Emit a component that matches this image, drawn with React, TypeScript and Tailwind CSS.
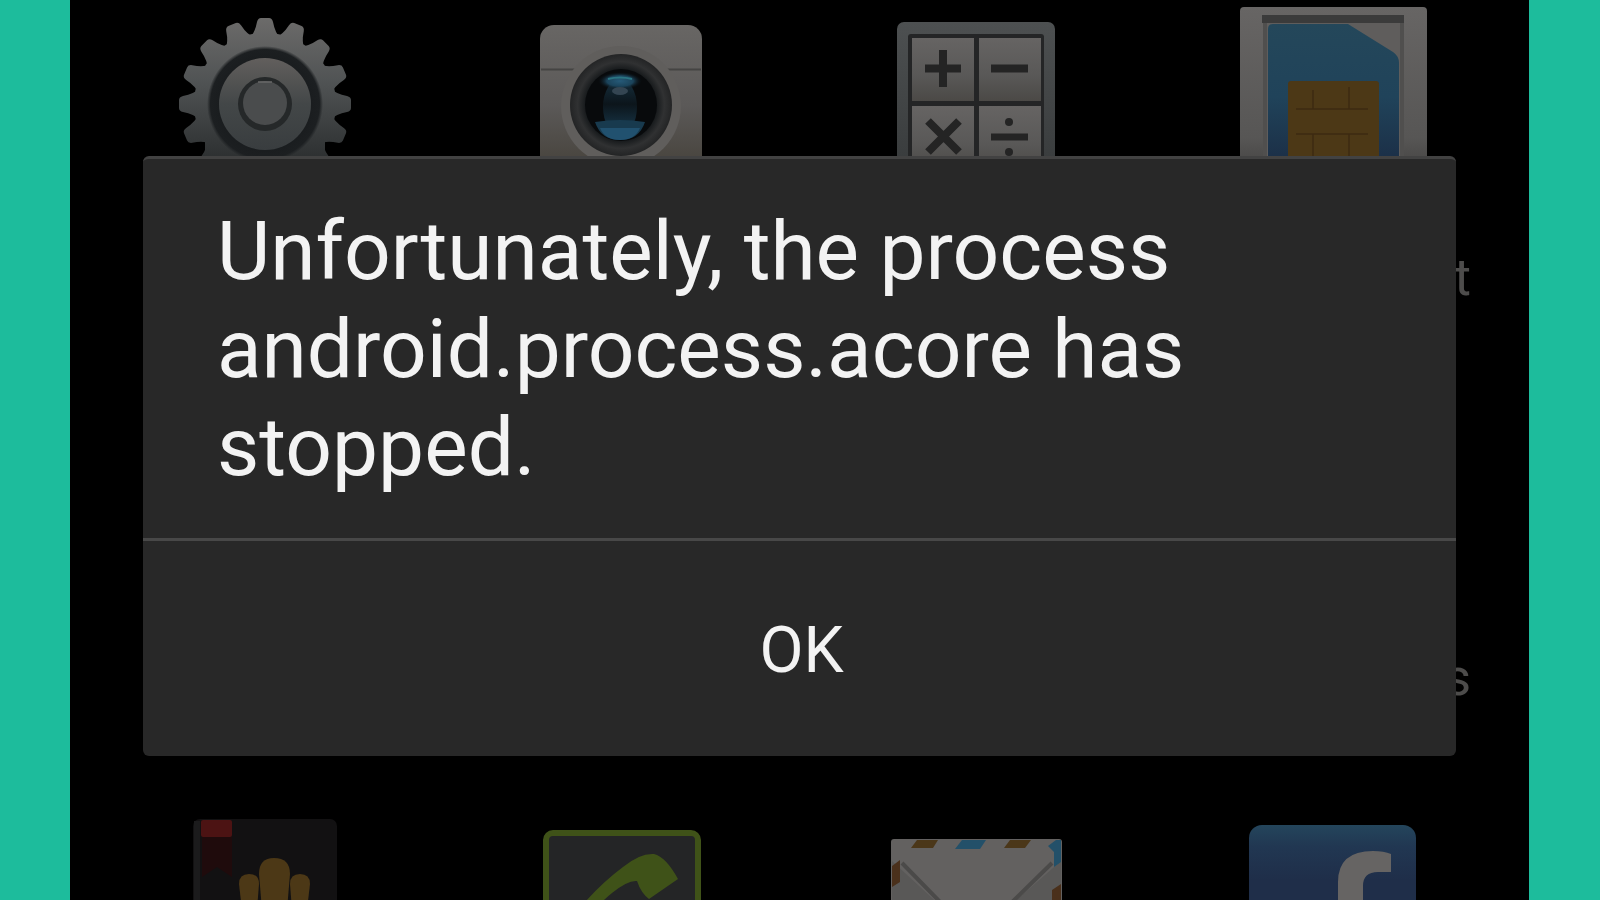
import type { ReactNode } from "react";

const TEETH = Array.from({ length: 16 }, (_, i) => i * 22.5);

const SettingsIcon = () => (
  <svg viewBox="164 0 200 170" className="w-[200px] h-[170px]">
    <defs>
      <linearGradient id="gear" gradientUnits="userSpaceOnUse" x1="0" y1="18" x2="0" y2="160">
        <stop offset="0" stopColor="#6c6b6a" />
        <stop offset="0.45" stopColor="#505354" />
        <stop offset="1" stopColor="#2c2f30" />
      </linearGradient>
      <linearGradient id="gearDish" x1="0" y1="0" x2="0" y2="1">
        <stop offset="0" stopColor="#625f5d" />
        <stop offset="0.5" stopColor="#434748" />
        <stop offset="1" stopColor="#393d3f" />
      </linearGradient>
      <radialGradient id="gearRing">
        <stop offset="0.8" stopColor="#1a1d1f" />
        <stop offset="0.94" stopColor="#1c1f21" />
        <stop offset="1" stopColor="#1c1f21" stopOpacity="0" />
      </radialGradient>
    </defs>
    <mask id="gearShape">
      <circle cx="265" cy="104" r="71" fill="#fff" />
      {TEETH.map((angle) => (
        <path
          key={angle}
          d="M249 39 Q255 33 257 22 Q258 18 261 18 H269 Q272 18 273 22 Q275 33 281 39 Z"
          fill="#fff"
          transform={`rotate(${angle} 265 104)`}
        />
      ))}
      <path d="M205 130 H325 V170 H205 Z" fill="#fff" />
    </mask>
    <rect x="165" width="200" height="170" fill="url(#gear)" mask="url(#gearShape)" />
    <circle cx="265" cy="104" r="58" fill="url(#gearRing)" />
    <circle cx="265" cy="104" r="46" fill="url(#gearDish)" />
    <circle cx="265" cy="104" r="27" fill="#252829" />
    <circle cx="265" cy="103" r="22" fill="#4a4c4d" />
    <path d="M258 82 H272" stroke="#696969" strokeWidth="1.5" />
  </svg>
);

const CameraIcon = () => (
  <svg viewBox="520 0 200 170" className="w-[200px] h-[170px]">
    <defs>
      <linearGradient id="camBody" x1="0" y1="0" x2="0" y2="1">
        <stop offset="0" stopColor="#686664" />
        <stop offset="0.55" stopColor="#5b5958" />
        <stop offset="1" stopColor="#46423b" />
      </linearGradient>
      <radialGradient id="camRim">
        <stop offset="0.7" stopColor="#171a1c" />
        <stop offset="0.85" stopColor="#303132" />
        <stop offset="1" stopColor="#232425" />
      </radialGradient>
      <radialGradient id="camGlow">
        <stop offset="0" stopColor="#265a78" />
        <stop offset="0.6" stopColor="#1b435a" />
        <stop offset="1" stopColor="#0b1116" stopOpacity="0" />
      </radialGradient>
      <linearGradient id="camIris" x1="0" y1="0" x2="0" y2="1">
        <stop offset="0" stopColor="#16303f" />
        <stop offset="0.45" stopColor="#0c151b" />
        <stop offset="1" stopColor="#1a3d52" />
      </linearGradient>
    </defs>
    <rect x="540" y="25" width="162" height="145" rx="14" fill="url(#camBody)" />
    <path d="M541 69.500 H701" stroke="#454443" strokeWidth="2" />
    <circle cx="621" cy="106" r="60" fill="#605e5c" />
    <circle cx="621" cy="105" r="51" fill="url(#camRim)" />
    <circle cx="621" cy="105" r="36" fill="#080a0c" />
    <ellipse cx="620" cy="107" rx="17" ry="28" fill="url(#camIris)" />
    <ellipse cx="620" cy="81" rx="22" ry="9" fill="url(#camGlow)" />
    <path d="M608 79 Q620 76 632 79" stroke="#2b7482" strokeWidth="2" fill="none" />
    <ellipse cx="620" cy="91" rx="8" ry="4" fill="#344552" />
    <path d="M595 122 Q620 118 645 122 Q639 140 620 140 Q601 140 595 122 Z" fill="#183a4e" />
    <path d="M600 128 H640 Q635 140 620 140 Q605 140 600 128 Z" fill="#21516f" />
  </svg>
);

const CalculatorIcon = () => (
  <svg viewBox="877 0 200 170" className="w-[200px] h-[170px]">
    <defs>
      <linearGradient id="calcKey" x1="0" y1="0" x2="0" y2="1">
        <stop offset="0" stopColor="#666463" />
        <stop offset="0.6" stopColor="#595857" />
        <stop offset="1" stopColor="#4b4946" />
      </linearGradient>
      <linearGradient id="calcFrame" x1="0" y1="0" x2="0" y2="1">
        <stop offset="0" stopColor="#4d5051" />
        <stop offset="1" stopColor="#383b3c" />
      </linearGradient>
    </defs>
    <rect x="897" y="22" width="158" height="150" rx="7" fill="url(#calcFrame)" />
    <rect x="908" y="34" width="136" height="138" rx="3" fill="#242526" />
    <rect x="912" y="38" width="62" height="63" fill="url(#calcKey)" />
    <rect x="979" y="38" width="62" height="63" fill="url(#calcKey)" />
    <rect x="912" y="106" width="62" height="64" fill="url(#calcKey)" />
    <rect x="979" y="106" width="62" height="64" fill="url(#calcKey)" />
    <g stroke="#242424" strokeWidth="8">
      <path d="M925 68.500 H961 M943 50 V87" />
      <path d="M991 68.500 H1028" />
      <path d="M928 121 L959 152 M959 121 L928 152" />
      <path d="M991 137 H1028" strokeWidth="7" />
    </g>
    <circle cx="1009" cy="122" r="4" fill="#242424" />
    <circle cx="1009" cy="152" r="4" fill="#242424" />
  </svg>
);

const SimIcon = () => (
  <svg viewBox="1233 0 200 170" className="w-[200px] h-[170px]">
    <defs>
      <linearGradient id="simFrame" x1="0" y1="0" x2="0" y2="1">
        <stop offset="0" stopColor="#676564" />
        <stop offset="0.8" stopColor="#575655" />
        <stop offset="1" stopColor="#454443" />
      </linearGradient>
      <linearGradient id="simCard" x1="0" y1="0" x2="0" y2="1">
        <stop offset="0" stopColor="#24475a" />
        <stop offset="0.5" stopColor="#20435a" />
        <stop offset="1" stopColor="#1b2c44" />
      </linearGradient>
    </defs>
    <rect x="1240" y="7" width="187" height="163" rx="4" fill="url(#simFrame)" />
    <path d="M1265 170 V19 H1402 V170" fill="#5f5d5c" stroke="#504f4e" strokeWidth="4" />
    <path d="M1262 19 H1404" stroke="#3b3b3b" strokeWidth="8" />
    <path d="M1268 170 V29 Q1268 24 1273 24 H1348 L1393 52 Q1399 56 1399 63 V170 Z" fill="url(#simCard)" />
    <rect x="1288" y="81" width="91" height="89" rx="3" fill="#4c3816" />
    <path
      d="M1296 109 H1368 M1296 134 H1368 M1313 90 V109 M1349 87 V109 M1313 134 V160 M1349 134 V160"
      stroke="#3d2a12"
      strokeWidth="1.5"
    />
  </svg>
);

const NotebookIcon = () => (
  <svg viewBox="164 800 200 170" className="w-[200px] h-[170px]">
    <rect x="193" y="819" width="144" height="160" rx="7" fill="#121112" />
    <path d="M197 821 V970" stroke="#1b1b1c" strokeWidth="6" />
    <path d="M202 837 H232 V877 L217 867 L202 877 Z" fill="#1f0b0c" />
    <rect x="201" y="820" width="31" height="17" rx="2" fill="#4c1313" />
    <g fill="#4c3816">
      <path d="M239 884 Q239 874 249 874 Q259 874 259 884 L257 910 H242 Z" />
      <path d="M290 884 Q290 874 300 874 Q310 874 310 884 L307 910 H292 Z" />
      <path d="M259 874 Q259 858 274 858 Q290 858 290 874 L287 910 H262 Z" />
    </g>
  </svg>
);

const PhoneIcon = () => (
  <svg viewBox="520 800 200 170" className="w-[200px] h-[170px]">
    <rect x="546" y="833" width="152" height="160" rx="7" fill="#242526" stroke="#3f5218" strokeWidth="6" />
    <path
      d="M580 908 Q600 884 623 867 Q640 853 654 854 Q666 857 678 879 L649 899 Q641 893 637 881 Q628 880 612 893 Q598 904 590 918 Z"
      fill="#3f5218"
    />
  </svg>
);

const MailIcon = () => (
  <svg viewBox="877 800 200 170" className="w-[200px] h-[170px]">
    <rect x="891" y="839" width="171" height="130" rx="3" fill="#636160" />
    <path d="M892 861 L945 910 H892 Z M1061 861 L1005 910 H1061 Z" fill="#595857" />
    <path d="M902 863 L946 908 M1052 863 L1004 910" stroke="#4b4a49" strokeWidth="4" fill="none" />
    <path d="M917 840 H938 L933 848 H911 Z M1010 840 H1031 L1025 848 H1004 Z" fill="#4b3719" />
    <path d="M962 840 H986 L980 849 H955 Z M1048 846 L1056 840 H1061 V862 L1054 867 V852 Z" fill="#235069" />
    <path d="M892 866 L900 860 V882 L892 887 Z M1052 890 L1061 884 V910 H1052 Z" fill="#4a301b" />
  </svg>
);

const FacebookIcon = () => (
  <svg viewBox="1233 800 200 170" className="w-[200px] h-[170px]">
    <defs>
      <linearGradient id="fb" gradientUnits="userSpaceOnUse" x1="0" y1="824" x2="0" y2="880">
        <stop offset="0" stopColor="#24465c" />
        <stop offset="0.4" stopColor="#213752" />
        <stop offset="1" stopColor="#1f2e49" />
      </linearGradient>
    </defs>
    <rect x="1249" y="825" width="167" height="160" rx="13" fill="url(#fb)" />
    <path
      d="M1338 970 V882 Q1338 851 1373 851 Q1384 851 1391 854 V872 H1378 Q1363 872 1363 886 V970 Z"
      fill="#666463"
    />
  </svg>
);

type App = {
  id: string;
  icon?: ReactNode;
  label?: string;
};

const apps: App[] = [
  { id: "a1", icon: <SettingsIcon /> },
  { id: "a2", icon: <CameraIcon /> },
  { id: "a3", icon: <CalculatorIcon /> },
  { id: "a4", icon: <SimIcon />, label: "t" },
  { id: "b1" },
  { id: "b2" },
  { id: "b3" },
  { id: "b4", label: "s" },
  { id: "c1", icon: <NotebookIcon /> },
  { id: "c2", icon: <PhoneIcon /> },
  { id: "c3", icon: <MailIcon /> },
  { id: "c4", icon: <FacebookIcon /> },
];

const AppGrid = () => {
  return (
    <div className="grid grid-cols-4 auto-rows-[400px] pl-4 pr-4.5">
      {apps.map(({ id, icon, label }) => (
        <div key={id} className="flex flex-col">
          <div className="flex justify-center h-[170px]">{icon}</div>
          {label && (
            <span className="mt-[78px] pr-10 text-right text-[52px] leading-[60px] text-[#4d4c4b]">
              {label}
            </span>
          )}
        </div>
      ))}
    </div>
  );
};

const ErrorDialog = () => {
  return (
    <div
      role="alertdialog"
      aria-describedby="message"
      className="w-9/10 rounded-md border-t-3 border-[#424242] bg-[#282828] text-[#f3f3f3]"
    >
      <p id="message" className="px-[74px] pt-[43px] pb-[42px] text-[82px] leading-[98px]">
        Unfortunately, the process
        <br />
        android.process.acore has
        <br />
        stopped.
      </p>
      <button
        type="button"
        className="block w-full h-[218px] border-t-3 border-[#484848] pt-1 pl-1 text-[64px]"
      >
        OK
      </button>
    </div>
  );
};

export default function App() {
  return (
    <div className="h-screen overflow-hidden bg-[#1dbc9c] pl-[70px] pr-[71px] font-['Roboto',sans-serif]">
      <main className="relative h-full overflow-hidden bg-black">
        <AppGrid />
        {/* Dialog sits over the dimmed home screen */}
        <div className="absolute inset-0 flex items-center justify-center pt-3">
          <ErrorDialog />
        </div>
      </main>
    </div>
  );
}
